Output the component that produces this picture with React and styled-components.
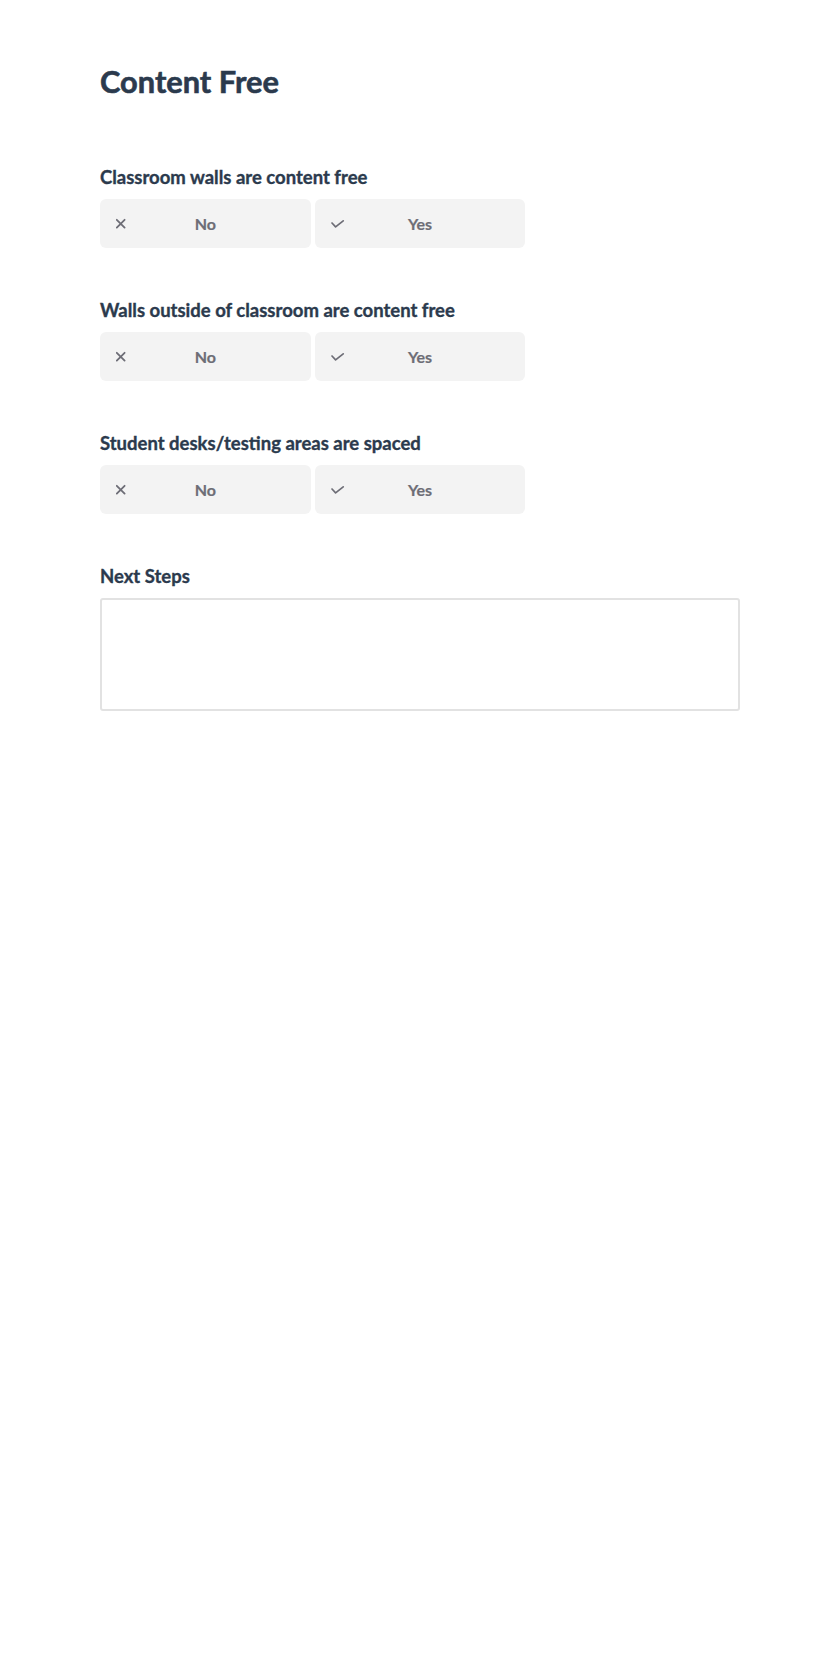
import React from 'react';
import styled, { createGlobalStyle } from 'styled-components';

const GlobalStyle = createGlobalStyle`
    body {
        margin: 0;
        background: #fff;
        font-family: Lato, "Open Sans", sans-serif;
    }
`;

const Page = styled.div`
    max-width: 640px;
    margin: 0 auto;
    padding-top: 64px;
`;

const Title = styled.h1`
    margin: 0 0 65px 0;
    font-size: 30.8px;
    line-height: 36px;
    font-weight: 700;
    color: #2b3a4d;
    -webkit-text-stroke: 0.6px #2b3a4d;
`;

const Section = styled.div`
    margin-bottom: 50px;
`;

const Label = styled.div`
    font-size: 18.5px;
    line-height: 24px;
    font-weight: 700;
    color: #2b3a4d;
    -webkit-text-stroke: 0.35px #2b3a4d;
    margin-bottom: 10px;
`;

const Choices = styled.div`
    display: grid;
    grid-template-columns: repeat(3, 1fr);
    gap: 4px;
`;

const Choice = styled.button`
    display: grid;
    grid-template-columns: 1fr auto 1fr;
    align-items: center;
    height: 49px;
    padding: 0 16px;
    border: none;
    border-radius: 6px;
    background: #f3f3f3;
    color: #6d6d76;
    font-family: inherit;
    font-size: 16px;
    font-weight: 700;
    -webkit-text-stroke: 0.2px #6d6d76;
    cursor: pointer;
    svg {
        display: block;
    }
`;

const TextArea = styled.textarea`
    display: block;
    box-sizing: border-box;
    width: 100%;
    height: 113px;
    border: 2px solid #e2e2e2;
    border-radius: 3px;
    resize: none;
    font-family: inherit;
    font-size: 16px;
    padding: 8px;
`;

const XIcon = () => (
    <svg width="16" height="16" viewBox="0 0 16 16">
        <path d="M0.8 3.8 L8.6 11.6 M8.6 3.8 L0.8 11.6" stroke="#6d6d76" strokeWidth="1.8" strokeLinecap="round" fill="none" />
    </svg>
);

const CheckIcon = () => (
    <svg width="16" height="16" viewBox="0 0 16 16">
        <path d="M1 7 L4.6 10.8 L12.2 4.8" stroke="#6d6d76" strokeWidth="1.7" strokeLinecap="round" strokeLinejoin="round" fill="none" />
    </svg>
);

const questions = [
    'Classroom walls are content free',
    'Walls outside of classroom are content free',
    'Student desks/testing areas are spaced',
];

const App = () => {
    return (
        <Page>
            <GlobalStyle />
            <Title>Content Free</Title>
            {questions.map(q => (
                <Section key={q}>
                    <Label>{q}</Label>
                    <Choices>
                        <Choice><XIcon /><span>No</span><span /></Choice>
                        <Choice><CheckIcon /><span>Yes</span><span /></Choice>
                    </Choices>
                </Section>
            ))}
            <Label>Next Steps</Label>
            <TextArea />
        </Page>
    );
};

export default App;
